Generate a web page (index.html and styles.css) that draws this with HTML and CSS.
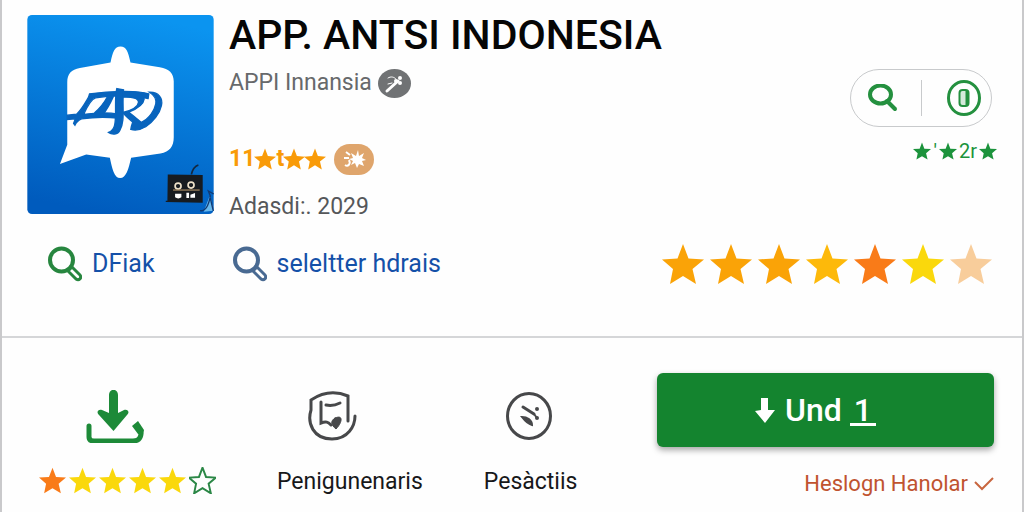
FILE: index.html
```
<!DOCTYPE html>
<html lang="id">

<head>
    <meta charset="UTF-8">
    <meta name="viewport" content="width=device-width, initial-scale=1.0">
    <title>APP. ANTSI INDONESIA</title>
    <link rel="stylesheet" href="styles.css">
</head>

<body>
    <svg class="symbols" aria-hidden="true">
        <symbol id="star" viewBox="0 0 42 40">
            <path d="M21 0l5.500 14.500L42 15.500 30.500 25 34 40 21 32 8 40l3-15L0 15.500l15.500-1z" />
        </symbol>
        <symbol id="magnifier" viewBox="0 0 34 36">
            <circle cx="13.500" cy="14" r="11.500" fill="none" stroke="currentColor" stroke-width="4" />
            <path d="M20 25l4-4 8 8c2 3-1 6-4 4z" fill="#fff" stroke="currentColor" stroke-width="3" stroke-linejoin="round" />
        </symbol>
    </svg>

    <main class="page">
        <section class="overview">
            <header class="app">
                <svg class="app-logo" viewBox="81 45 560 598" role="img" aria-label="Logo">
                    <defs>
                        <linearGradient id="logoBlue" x1="0.600" y1="0" x2="0.400" y2="1">
                            <stop offset="0" stop-color="#0b94f0" />
                            <stop offset="1" stop-color="#005bbd" />
                        </linearGradient>
                    </defs>
                    <rect x="81" y="45" width="560" height="598" rx="14" fill="url(#logoBlue)" />
                    <path d="M331 188C338 156 343 140 361 140s23 16 30 48l88 14c28 5 42 18 42 42v168c0 28-12 44-40 49l-88 13c-8 34-15 61-33 61s-24-28-31-61l-71-10-79 29 22-58V247c0-25 12-39 38-43z" fill="#fff" />
                    <g fill="#0864bd" stroke="#0864bd" stroke-width="4">
                        <path d="M201 346l28-3c16-14 28-38 36-51l3-10c60-8 140-12 178 0l-2 14c-44-10-110-10-158-2-14 4-27 30-36 50 34-5 78-6 104-1l-2 12c-38-5-74-3-108 2-10 4-16 10-20 19l-4-5c2-6 4-10 5-14l-24 2z" />
                        <path d="M322 290l17 1c-9 20-17 36-31 53l-18 3-6-9c14-12 28-29 38-48z" />
                        <path d="M350 266l20 4c-5 50 6 92-11 122-6 13-24 13-34 6 22-9 20-32 21-54 1-28-2-56 4-78z" />
                        <path d="M370 278c34-5 64 1 62 20-2 18-24 30-46 39 12 9 25 20 35 29l-13 10c-15-14-29-24-40-38 30-8 46-18 47-31 0-12-17-16-45-15z" />
                        <path d="M448 277c28-1 41 19 36 40-5 24-25 50-48 64-14 9-28 12-44 8 2-12 5-25 12-33l17 13c28-12 42-38 46-57 3-18-6-27-19-35z" />
                    </g>
                    <path d="M574 524c4-17 9-24 21-28" fill="none" stroke="#14283f" stroke-width="5" />
                    <path d="M503 524l105 2v83l-111-2v-4h5z" fill="#171b20" />
                    <g fill="none" stroke="#eee1c9" stroke-width="5">
                        <circle cx="534" cy="559" r="9" />
                        <circle cx="573" cy="556" r="9" />
                        <path d="M519 571h80" stroke="#c6a36f" stroke-width="3" />
                    </g>
                    <path d="M525 582h19v11c-6 5-14 4-19 0zm34-3h8v16h-8zm12 6l14-5v14h-14z" fill="#fff" />
                    <path d="M611 636l19-50 11 47z" fill="#67b8ed" />
                    <path d="M600 633c19 3 27-23 31-44l-6-15 16 9M629 588l11 46" fill="none" stroke="#123a72" stroke-width="4" />
                </svg>

                <div class="app-info">
                    <h1>APP. ANTSI INDONESIA</h1>
                    <p class="developer">
                        APPI Innansia
                        <svg class="verified" viewBox="0 0 33 29" aria-hidden="true">
                            <ellipse cx="16.500" cy="14.500" rx="16.500" ry="14.500" fill="#707274" />
                            <path d="M9 22l11-10" fill="none" stroke="#fff" stroke-width="3" stroke-linecap="round" />
                            <path d="M10 9c3-2 6-1 8 1M10 15l4-1" fill="none" stroke="#fff" stroke-width="1" stroke-linecap="round" />
                            <circle cx="22" cy="9" r="2" fill="#fff" />
                            <circle cx="22" cy="14" r="2" fill="#fff" />
                            <circle cx="18" cy="12" r="2" fill="#fff" />
                        </svg>
                    </p>
                    <div class="score">
                        <span>11</span>
                        <svg class="score-star"><use href="#star" /></svg>
                        <span>t</span>
                        <svg class="score-star"><use href="#star" /></svg>
                        <svg class="score-star"><use href="#star" /></svg>
                        <svg class="score-badge" viewBox="0 0 40 31" aria-hidden="true">
                            <rect width="40" height="31" rx="15.500" fill="#dfa56c" />
                            <path d="M24 6l1 6 5-3-2 5 4 2-4 1 2 5-5-2-2 4-2-5-4 2 2-4-4-2 4-1-2-5 5 3z" fill="#fff" />
                            <path d="M12 8l4 3M10 14h5M15 16c2 4-1 7-4 5" fill="none" stroke="#fff" stroke-width="2" />
                        </svg>
                    </div>
                    <p class="date">Adasdi:. 2029</p>
                </div>

                <div class="tools">
                    <div class="tool-pill">
                        <button type="button" aria-label="Cari">
                            <svg width="30" height="28" viewBox="0 0 30 28" fill="none" stroke="#24903f">
                                <ellipse cx="12.500" cy="10.500" rx="10.500" ry="9" stroke-width="4" />
                                <path d="M19 17l8 8" stroke-width="4" stroke-linecap="round" />
                            </svg>
                        </button>
                        <button type="button" aria-label="Info">
                            <svg width="34" height="36" viewBox="0 0 34 36" fill="none" stroke="#24903f">
                                <ellipse cx="17" cy="18" rx="15.500" ry="16.500" stroke-width="3" />
                                <rect x="12.500" y="10" width="9" height="16" rx="3" fill="#d5eadb" stroke-width="2" />
                                <path d="M20 11v14" stroke-width="3" />
                            </svg>
                        </button>
                    </div>
                    <div class="tool-rating">
                        <svg class="tool-star"><use href="#star" /></svg>
                        <span>'</span>
                        <svg class="tool-star"><use href="#star" /></svg>
                        <span>2r</span>
                        <svg class="tool-star"><use href="#star" /></svg>
                    </div>
                </div>
            </header>

            <div class="shortcuts">
                <a class="shortcut" href="#">
                    <svg class="shortcut-icon green"><use href="#magnifier" /></svg>
                    DFiak
                </a>
                <a class="shortcut" href="#">
                    <svg class="shortcut-icon slate"><use href="#magnifier" /></svg>
                    seleltter hdrais
                </a>
                <div class="big-stars" role="img" aria-label="Rating">
                    <svg class="amber"><use href="#star" /></svg>
                    <svg class="amber"><use href="#star" /></svg>
                    <svg class="amber"><use href="#star" /></svg>
                    <svg class="gold"><use href="#star" /></svg>
                    <svg class="orange"><use href="#star" /></svg>
                    <svg class="yellow"><use href="#star" /></svg>
                    <svg class="peach"><use href="#star" /></svg>
                </div>
            </div>
        </section>

        <section class="actions">
            <div class="stats">
                <div class="stat stat-download">
                    <div class="stat-icon">
                        <svg width="58" height="53" viewBox="0 0 58 53" aria-hidden="true">
                            <path d="M23 5c0-7 9-7 9 0v18l6-3c4-1 6 2 3 5L27.500 41 13 25c-3-3-1-6 3-5l7 3z" fill="#1d8a38" />
                            <path d="M3 36v11c0 3 2 4 5 4h39c8 0 9-7 7-11" fill="none" stroke="#1d8a38" stroke-width="5" stroke-linecap="round" />
                            <path d="M46 36l6-5 6 9-1 5-5-1z" fill="#1d8a38" />
                        </svg>
                    </div>
                    <div class="small-stars" role="img" aria-label="Rating">
                        <svg class="orange"><use href="#star" /></svg>
                        <svg class="yellow"><use href="#star" /></svg>
                        <svg class="yellow"><use href="#star" /></svg>
                        <svg class="yellow"><use href="#star" /></svg>
                        <svg class="yellow"><use href="#star" /></svg>
                        <svg class="outline"><use href="#star" /></svg>
                    </div>
                </div>
                <div class="stat stat-usage">
                    <div class="stat-icon">
                        <svg width="50" height="50" viewBox="0 0 50 50" fill="none" stroke="#47484a" stroke-width="3" stroke-linecap="round" aria-hidden="true">
                            <path d="M41 30V5Q22-3 4 9v10c-4 13 2 29 21 29 16 0 23-13 23-23" />
                            <path d="M14 11v21c5-2 7-1 10 2M19 14c5 1 10 0 14-2" />
                            <path d="M28 27c9-4 7 5 1 11-5-4-6-8-1-11z" fill="#47484a" stroke-width="1" />
                        </svg>
                    </div>
                    <span class="stat-label">Penigunenaris</span>
                </div>
                <div class="stat">
                    <div class="stat-icon">
                        <svg width="46" height="48" viewBox="0 0 46 48" fill="none" stroke="#47484a" stroke-width="3" stroke-linecap="round" aria-hidden="true">
                            <ellipse cx="23" cy="24" rx="21.500" ry="22.500" />
                            <path d="M17 15l11 7" />
                            <path d="M16 25c5 0 10 3 10 8-4-1-7-4-10-8z" fill="#47484a" stroke-width="2" />
                            <path d="M31 17v0M31 26v0" stroke-width="4" />
                            <path d="M28 22l3 4" stroke-width="2" />
                        </svg>
                    </div>
                    <span class="stat-label">Pesàctiis</span>
                </div>
            </div>

            <div class="install">
                <button type="button" class="install-button">
                    <svg width="20" height="25" viewBox="0 0 20 25" fill="#fff" aria-hidden="true">
                        <path d="M6 0h7v12h7L10 25 0 13l6-1z" />
                    </svg>
                    <span>Und <span class="count">1</span></span>
                </button>
                <a class="details" href="#">
                    Heslogn Hanolar
                    <svg width="20" height="14" viewBox="0 0 20 14" fill="none" stroke="#c8663f" stroke-width="2" aria-hidden="true">
                        <path d="M1 5l7 7L19 1" />
                    </svg>
                </a>
            </div>
        </section>
    </main>
</body>

</html>
```
FILE: styles.css
```
* {
    box-sizing: border-box;
}

body {
    margin: 0;
    font-family: Roboto, "Liberation Sans", sans-serif;
    font-size: 23px;
    line-height: 32px;
    color: #17181a;
    background: #fefefe;
}

h1,
p {
    margin: 0;
}

svg {
    display: block;
    flex: none;
}

button {
    font: inherit;
    border: none;
    background: none;
    cursor: pointer;
}

a {
    text-decoration: none;
}

.symbols {
    display: none;
}

.page {
    min-height: 100vh;
    border: solid #c9c9cb;
    border-width: 0 2px;
}

.overview {
    padding: 15px 30px 52px 25px;
    border-bottom: 2px solid #d5d6d8;
}

.app {
    display: flex;
    gap: 15px;
}

.app-logo {
    width: 187px;
    height: 199px;
}

h1 {
    font-size: 41px;
    font-weight: 500;
    line-height: 40px;
    color: #060606;
}

.developer {
    display: flex;
    align-items: center;
    gap: 6px;
    margin-top: 12px;
    color: #67696b;
}

.verified {
    width: 33px;
    height: 29px;
}

.score {
    display: flex;
    align-items: center;
    margin-top: 44px;
    font-weight: 700;
    color: #f99b08;
    fill: #f99b08;
}

.score-star {
    width: 22px;
    height: 24px;
    margin-left: -1px;
}

.score-badge {
    width: 40px;
    height: 31px;
    margin-left: 8px;
}

.date {
    margin-top: 16px;
    color: #55575a;
}

.tools {
    display: flex;
    flex-direction: column;
    align-items: flex-end;
    margin-left: auto;
    padding-top: 54px;
}

.tool-pill {
    display: flex;
    padding: 10px 0;
    border: 1px solid #c8cacc;
    border-radius: 29px;
}

.tool-pill button {
    display: flex;
    align-items: center;
    justify-content: center;
    width: 70px;
    height: 36px;
    padding: 0 14px 0 8px;
}

.tool-pill button + button {
    padding: 0 10px 0 24px;
    border-left: 1px solid #c8cacc;
}

.tool-rating {
    display: flex;
    align-items: center;
    gap: 2px;
    margin: 8px -5px 0 0;
    font-size: 20px;
    color: #1c933c;
    fill: #1c933c;
}

.tool-star {
    width: 18px;
    height: 18px;
}

.shortcuts {
    display: flex;
    align-items: center;
    gap: 78px;
    margin-top: 21px;
    padding-left: 21px;
}

.shortcut {
    display: flex;
    align-items: center;
    gap: 10px;
    font-size: 25px;
    color: #1450a8;
}

.shortcut-icon {
    width: 34px;
    height: 36px;
}

.green {
    color: #27863f;
}

.slate {
    color: #496a92;
}

.big-stars {
    display: flex;
    gap: 6px;
    margin-left: auto;
}

.big-stars svg {
    width: 42px;
    height: 40px;
}

.amber {
    fill: #faa307;
}

.gold {
    fill: #fdb90a;
}

.orange {
    fill: #f97b18;
}

.yellow {
    fill: #fad80c;
}

.peach {
    fill: #f8cd9b;
}

.outline {
    fill: none;
    stroke: #2b8746;
    stroke-width: 3px;
    overflow: visible;
}

.actions {
    display: grid;
    grid-template-columns: minmax(0, 537fr) minmax(0, 337fr);
    gap: 81px;
    padding: 35px 28px 11px 37px;
}

.stats {
    display: flex;
    gap: 61px;
}

.stat-icon {
    display: flex;
    align-items: center;
    height: 56px;
    margin: 15px 0 22px 22px;
}

.stat-download .stat-icon {
    margin-left: 47px;
}

.stat-usage .stat-icon {
    margin-left: 30px;
}

.stat-label {
    display: block;
}

.small-stars {
    display: flex;
    gap: 3px;
    padding-top: 1px;
}

.small-stars svg {
    width: 27px;
    height: 27px;
}

.install {
    display: flex;
    flex-direction: column;
    align-items: flex-end;
}

.install-button {
    display: flex;
    align-items: center;
    justify-content: center;
    gap: 10px;
    width: 100%;
    height: 74px;
    padding: 0 20px 0 0;
    border-radius: 6px;
    background: #14842f;
    box-shadow: 0 3px 6px rgba(0, 0, 0, 0.35);
    font-size: 32px;
    font-weight: 500;
    color: #fff;
}

.count {
    display: inline-block;
    padding: 0 4px;
    border-bottom: 3px solid #fff;
    line-height: 26px;
}

.details {
    display: flex;
    align-items: center;
    gap: 6px;
    margin-top: 21px;
    font-size: 22px;
    color: #c0532f;
}
```
